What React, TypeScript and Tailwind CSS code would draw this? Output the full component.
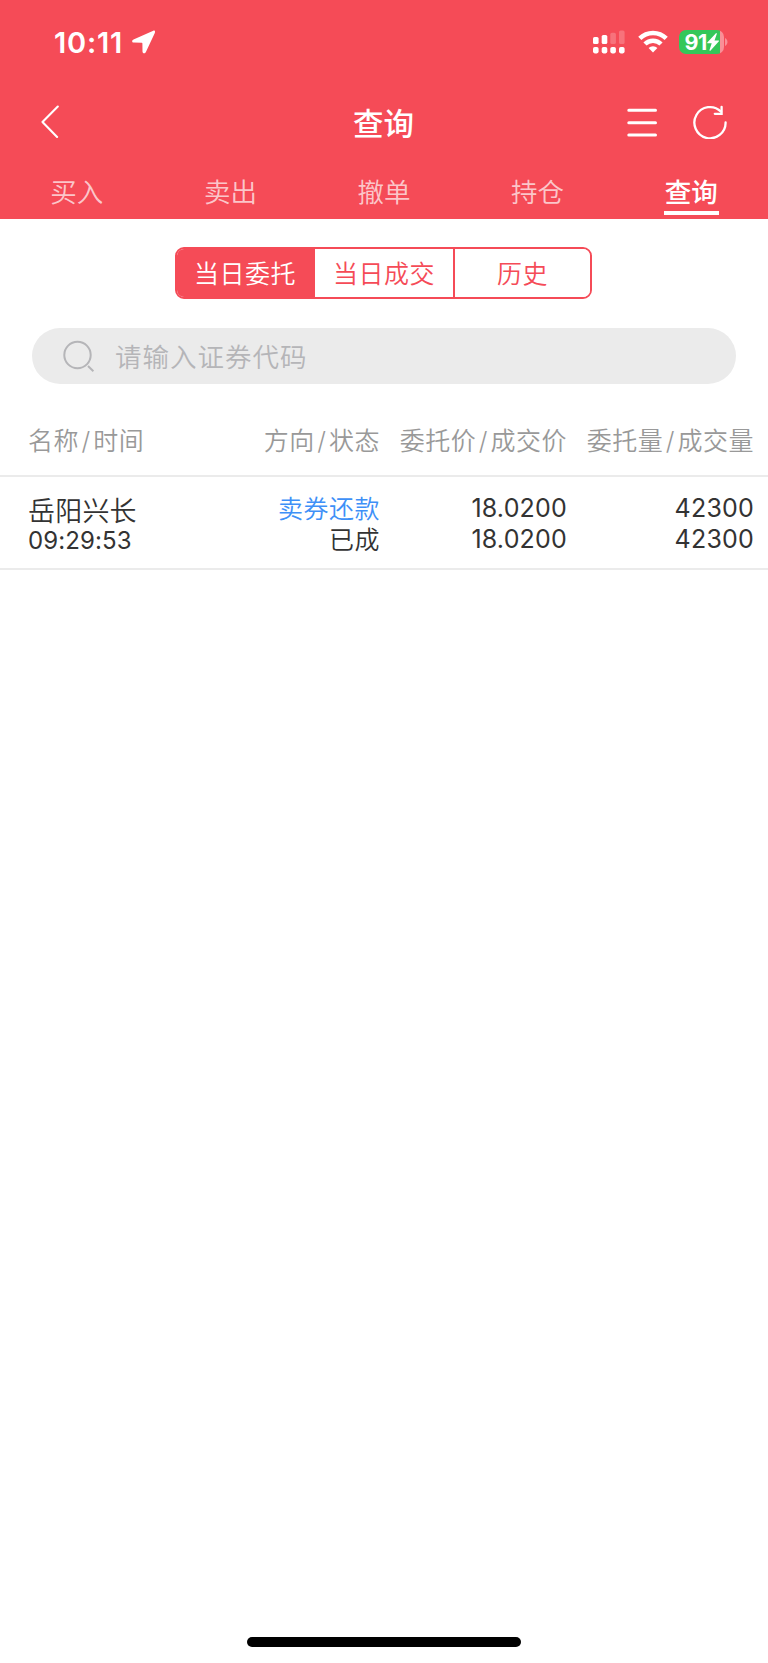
import React, { useState } from 'react';

const tabs = ['买入', '卖出', '撤单', '持仓', '查询'];
const ranges = ['当日委托', '当日成交', '历史'];

const orders = [
  {
    name: '岳阳兴长',
    time: '09:29:53',
    direction: '卖券还款',
    status: '已成',
    price: '18.0200',
    dealPrice: '18.0200',
    amount: '42300',
    dealAmount: '42300',
  },
];

const StatusBar = () => (
  <div className="flex h-[84px] items-center justify-between pl-[54px] pr-[40px]">
    <div className="flex items-center">
      <span className="pt-px text-[29px] font-semibold leading-none tracking-[0.8px]">10:11</span>
      <svg className="ml-[9px]" width="24" height="24" viewBox="0 0 24 24" fill="currentColor">
        <path d="M21.3.7 1.5 9.4C-.3 10.3-.3 12.5 1.6 12.6L9.8 12.8C10.2 12.8 10.4 13 10.4 13.4L10.5 21.4C10.6 23.6 13 24 13.9 22.1L22.8 2.9C23.5 1.3 22.6.2 21.3.7Z" />
      </svg>
    </div>
    <div className="flex items-center">
      {/* Dual SIM signal */}
      <svg width="32" height="24" viewBox="0 0 32 24" fill="currentColor">
        <rect x="0" y="7" width="5.6" height="7" rx="1.6" />
        <rect x="8.7" y="5" width="5.6" height="9" rx="1.6" />
        <rect x="17.3" y="2.8" width="5.6" height="11.2" rx="1.6" opacity=".22" />
        <rect x="26" y=".4" width="5.6" height="13.6" rx="1.6" opacity=".22" />
        <rect x="0" y="17" width="5.6" height="6.4" rx="1.8" />
        <rect x="8.7" y="17" width="5.6" height="6.4" rx="1.8" />
        <rect x="17.3" y="17" width="5.6" height="6.4" rx="1.8" />
        <rect x="26" y="17" width="5.6" height="6.4" rx="1.8" />
      </svg>
      <svg className="ml-[13px]" width="30" height="24" viewBox="0 0 30 24" fill="none" stroke="currentColor" strokeWidth="4.5">
        <path d="M1.8 8.4a18.6 18.6 0 0 1 26.4 0" />
        <path d="M7 14a11.3 11.3 0 0 1 16 0" />
        <path d="M15 22.4 10.6 18a6.3 6.3 0 0 1 8.8 0Z" fill="currentColor" stroke="none" />
      </svg>
      <div className="ml-[11px] flex h-6 w-[45px] items-center rounded-[7px] bg-[linear-gradient(to_right,#34c759_41px,#f98f97_41px)] pl-[6px]">
        <span className="pt-px text-[21.5px] font-bold leading-none tracking-[-0.5px]">91</span>
        <svg width="12" height="18" viewBox="0 0 12 18" fill="currentColor">
          <path d="M8.7.4.5 9.3c-.5.6-.3 1 .4 1h3.8L2.6 16.8c-.3 1 .4 1.3 1 .6L11.7 8.6c.5-.6.3-1-.4-1H7.5L9.7 1.2C10 .2 9.3-.2 8.7.4Z" />
        </svg>
      </div>
      <svg className="ml-[1.5px]" width="3" height="8" viewBox="0 0 3 8" fill="#f98f97">
        <path d="M0 0c3.3 1.5 3.3 6.5 0 8Z" />
      </svg>
    </div>
  </div>
);

const NavBar = () => (
  <div className="grid h-[76px] grid-cols-3 items-center pl-[40px] pr-[41px]">
    <svg width="19" height="34" viewBox="0 0 19 34" fill="none" stroke="currentColor" strokeWidth="2.1" strokeLinecap="round" strokeLinejoin="round">
      <path d="M17.8 1.5 2.5 17l14.6 15" />
    </svg>
    <h1 className="pt-[4px] text-center text-[30.5px] font-medium leading-none">查询</h1>
    <div className="flex items-center justify-end">
      <svg width="30" height="30" viewBox="0 0 30 30" stroke="currentColor" strokeWidth="3" strokeLinecap="round">
        <path d="M1.8 3.3h26.7M1.8 15.7h26.7M1.8 28h26.7" />
      </svg>
      <svg className="ml-[36px]" width="34" height="34" viewBox="0 0 34 34" fill="none" stroke="currentColor" strokeWidth="2.3" strokeLinecap="round">
        <path d="M32.6 17.4A15.6 15.6 0 1 1 28 6.6" />
        <path d="M28.6 1.8v7h-6.8" />
      </svg>
    </div>
  </div>
);

const QueryPage = () => {
  const [activeTab, setActiveTab] = useState('查询');
  const [activeRange, setActiveRange] = useState('当日委托');
  const [keyword, setKeyword] = useState('');

  return (
    <div className="flex h-[1663px] w-[768px] flex-col bg-white font-['Inter','Noto_Sans_CJK_SC',sans-serif] text-[#333]">
      <header className="h-[219px] bg-[#f54b57] text-white">
        <StatusBar />
        <NavBar />
        <nav className="grid h-[59px] grid-cols-5">
          {tabs.map((tab) => (
            <button
              key={tab}
              onClick={() => setActiveTab(tab)}
              className={`flex flex-col items-center pt-[13px] text-[26.5px] leading-[38px] ${
                activeTab === tab ? 'font-medium text-white' : 'font-[350] text-white/70'
              }`}
            >
              {tab}
              {activeTab === tab && <span className="h-1 w-[55px] bg-white" />}
            </button>
          ))}
        </nav>
      </header>

      {/* Range selector */}
      <div className="ml-[175px] mt-[28px] grid h-[52px] w-[417px] grid-cols-[138px_140px_1fr] divide-x-2 divide-[#f54b57] overflow-hidden rounded-[9px] border-2 border-[#f54b57]">
        {ranges.map((range) => (
          <button
            key={range}
            onClick={() => setActiveRange(range)}
            className={`pt-[3px] text-[25px] font-[350] leading-none tracking-[0.5px] ${
              activeRange === range ? 'bg-[#f54b57] text-white' : 'bg-white text-[#f54b57]'
            }`}
          >
            {range}
          </button>
        ))}
      </div>

      {/* Search */}
      <label className="mx-[32px] mt-[29px] flex h-[56px] items-center rounded-full bg-[#ebebeb] pl-[31px]">
        <svg width="32" height="32" viewBox="0 0 32 32" fill="none" stroke="#b5b5b8" strokeWidth="2">
          <circle cx="14.5" cy="15" r="13.2" />
          <path d="m25 26 5.4 5.2" />
        </svg>
        <input
          value={keyword}
          onChange={(e) => setKeyword(e.target.value)}
          placeholder="请输入证券代码"
          className="ml-[20px] h-[52px] flex-1 bg-transparent pt-[2px] text-[26.5px] font-[350] tracking-[1px] outline-none placeholder:text-[#b5b5b8]"
        />
      </label>

      {/* Order list */}
      <div className="mt-[20px] grid h-[73px] grid-cols-[1fr_190px_187px_187px] items-center border-b-2 border-[#ebebeb] pl-[28px] pr-[14px] pt-[4px] text-[25px] font-[350] tracking-[0.5px] text-[#999]">
        <span>名称<i className="mx-[2.5px] not-italic">/</i>时间</span>
        <span className="text-right">方向<i className="mx-[2.5px] not-italic">/</i>状态</span>
        <span className="text-right">委托价<i className="mx-[2.5px] not-italic">/</i>成交价</span>
        <span className="text-right">委托量<i className="mx-[2.5px] not-italic">/</i>成交量</span>
      </div>
      {orders.map((order) => (
        <div
          key={order.time}
          className="grid h-[93px] grid-cols-[1fr_190px_187px_187px] border-b-2 border-[#ebebeb] pl-[28px] pr-[14px] pt-[16px] text-[25px] leading-[31px]"
        >
          <div>
            <p className="pt-[4px] text-[27px] font-[350] leading-[30px] tracking-[0.2px]">{order.name}</p>
            <p className="text-[24px] leading-[28px] tracking-[0.1px]">{order.time}</p>
          </div>
          <div className="pt-px text-right font-[350] tracking-[0.5px]">
            <p className="text-[#3e90f7]">{order.direction}</p>
            <p>{order.status}</p>
          </div>
          <div className="text-right tracking-[0.2px]">
            <p>{order.price}</p>
            <p>{order.dealPrice}</p>
          </div>
          <div className="text-right tracking-[0.2px]">
            <p>{order.amount}</p>
            <p>{order.dealAmount}</p>
          </div>
        </div>
      ))}

      {/* Home indicator */}
      <div className="mx-auto mb-[16px] mt-auto h-[10px] w-[274px] rounded-full bg-black" />
    </div>
  );
};

export default QueryPage;
